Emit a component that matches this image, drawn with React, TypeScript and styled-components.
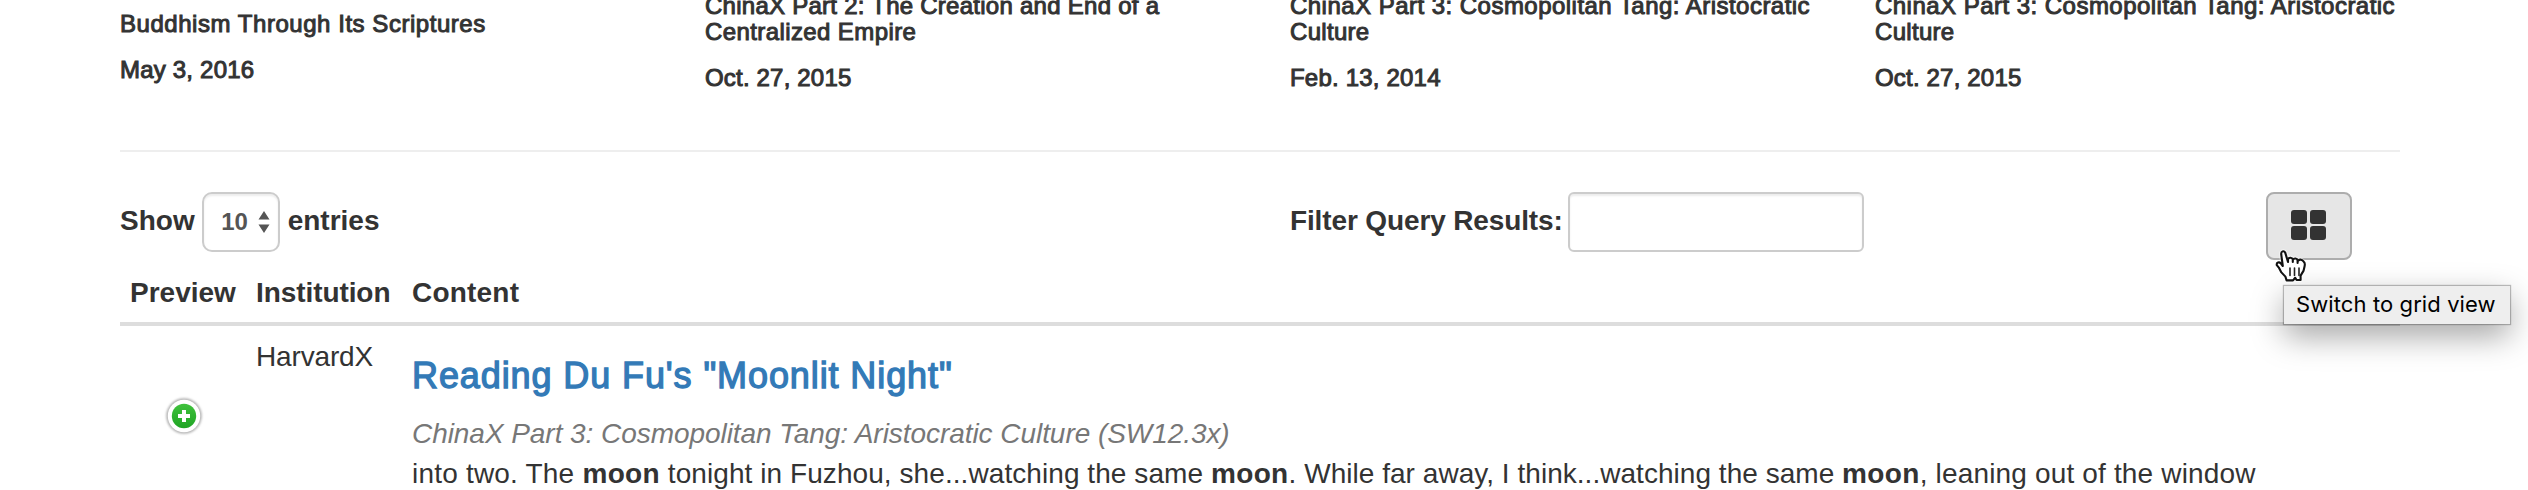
import React from "react";
import styled, { createGlobalStyle } from "styled-components";

const GlobalStyle = createGlobalStyle`
  * {
    box-sizing: border-box;
  }
  body {
    margin: 0;
    background: #fff;
    color: #333;
    font-family: "Liberation Sans", Arial, sans-serif;
    font-size: 28px;
    line-height: 40px;
  }
`;

const Page = styled.main`
  height: 490px;
  padding: 0 128px 0 120px;
  overflow: hidden;
  white-space: nowrap;
`;

const CourseRow = styled.section`
  display: grid;
  grid-template-columns: repeat(3, 585px) 1fr;
  height: 152px;
  border-bottom: 2px solid #eee;
`;

const Course = styled.article<{ $shift: number }>`
  margin-top: ${(p) => p.$shift}px;
`;

/* Medium weight, drawn as regular with a thin outline. */
const CourseLine = styled.div<{ $tracking: number }>`
  font-size: 24px;
  line-height: 26px;
  letter-spacing: ${(p) => p.$tracking}px;
  -webkit-text-stroke: 1px #333;
`;

const CourseDate = styled(CourseLine)`
  margin-top: 20px;
`;

const Toolbar = styled.section`
  display: grid;
  grid-template-columns: 1170px 1fr auto;
  align-items: start;
  height: 120px;
  padding: 40px 48px 0 0;
`;

const Field = styled.label<{ $gap: number; $tracking?: number }>`
  display: flex;
  gap: ${(p) => p.$gap}px;
  font-weight: bold;
  line-height: 58px;
  letter-spacing: ${(p) => p.$tracking ?? 0}px;
`;

const LengthSelect = styled.span`
  display: flex;
  align-items: center;
  justify-content: space-between;
  width: 78px;
  height: 60px;
  padding: 0 8px 0 17px;
  border: 2px solid #ccc;
  border-radius: 10px;
  box-shadow: inset 0 2px 2px rgba(0, 0, 0, 0.075);
  color: #555;
  font-size: 24px;
  line-height: 57px;
`;

const LengthValue = styled.span`
  height: 58px;
`;

const FilterInput = styled.input`
  width: 296px;
  height: 60px;
  border: 2px solid #ccc;
  border-radius: 6px;
  box-shadow: inset 0 2px 2px rgba(0, 0, 0, 0.075);
`;

const GridAnchor = styled.div`
  position: relative;
  width: 86px;
  height: 68px;
`;

const GridButton = styled.button`
  display: flex;
  width: 100%;
  height: 100%;
  padding: 16px 0 0 23px;
  border: 2px solid #adadad;
  border-radius: 8px;
  background: #e6e6e6;
`;

const Pointer = styled.svg`
  position: absolute;
  z-index: 2;
  left: 8px;
  top: 55px;
`;

const Tooltip = styled.div`
  position: absolute;
  z-index: 1;
  left: 18px;
  top: 94px;
  width: 226px;
  height: 38px;
  padding-left: 12px;
  background: #eee;
  box-shadow: 0 0 1px 1px rgba(0, 0, 0, 0.25), 0 12px 32px rgba(0, 0, 0, 0.36);
  color: #000;
  font-family: Inter, sans-serif;
  font-size: 22px;
  line-height: 36px;
  letter-spacing: 0.1px;
`;

const tableColumns = "126px 156px 1fr";

const TableHead = styled.div`
  display: grid;
  grid-template-columns: ${tableColumns};
  height: 54px;
  padding: 1px 0 0 10px;
  border-bottom: 4px solid #ddd;
  font-weight: bold;
`;

const TableRow = styled.div`
  display: grid;
  grid-template-columns: ${tableColumns};
  height: 164px;
  padding: 11px 0 0 10px;
`;

const HeadCell = styled.div<{ $tracking?: number }>`
  letter-spacing: ${(p) => p.$tracking ?? 0}px;
`;

const PreviewCell = styled.div`
  padding: 59px 0 0 34px;
`;

const ContentCell = styled.div`
  padding-top: 19px;
`;

const ResultTitle = styled.a`
  display: block;
  color: #337ab7;
  font-size: 36px;
  line-height: 40px;
  letter-spacing: 0.9px;
  -webkit-text-stroke: 1.3px #337ab7;
`;

const Source = styled.em`
  display: block;
  margin-top: 18px;
  color: #777;
  letter-spacing: -0.055px;
`;

const Excerpt = styled.p`
  margin: 0;
`;

const Run = styled.span<{ $tracking: number }>`
  letter-spacing: ${(p) => p.$tracking}px;
`;

const Match = styled.b`
  letter-spacing: 0.35px;
`;

const PlusIcon = () => (
  <svg width="40" height="40" viewBox="0 0 40 40" display="block">
    <defs>
      <linearGradient id="plusFill" x1="0" y1="0" x2="0" y2="1">
        <stop offset="0" stopColor="#3fc13c" />
        <stop offset="1" stopColor="#1fa424" />
      </linearGradient>
      <filter id="plusShadow" x="-20%" y="-20%" width="140%" height="140%">
        <feGaussianBlur stdDeviation="0.8" />
      </filter>
    </defs>
    <circle cx="20" cy="20" r="17.8" fill="#b4b4b4" filter="url(#plusShadow)" />
    <circle cx="20" cy="20" r="16.2" fill="#fff" />
    <circle cx="20" cy="20" r="12.2" fill="url(#plusFill)" />
    <path d="M18 14h4v4h4v4h-4v4h-4v-4h-4v-4h4z" fill="#fff" />
  </svg>
);

const GridIcon = () => (
  <svg width="35" height="30" viewBox="0 0 35 30" fill="#333">
    <rect width="16" height="14" rx="3" />
    <rect x="19" width="16" height="14" rx="3" />
    <rect y="16" width="16" height="14" rx="3" />
    <rect x="19" y="16" width="16" height="14" rx="3" />
  </svg>
);

const SortArrows = () => (
  <svg width="12" height="22" viewBox="0 0 12 22" fill="#555">
    <path d="M6 0l5.5 8.5H.5zM6 22L.5 13.5h11z" />
  </svg>
);

const HandPointer = () => (
  <Pointer width="36" height="38" viewBox="0 0 36 38">
    <path
      d="M8 15.5L7.2 7.2C7 4.2 9.8 3.2 11.2 5.6L14 11.8C15.2 10 18.2 10.2 18.8 12.6C20 10.8 23 11.2 23.6 13.4C25.6 11.6 28.6 12.6 29.4 14.6C30.8 15.4 31 17.4 30.6 19.2L29.6 23.6L26.6 28.6L26.6 33L22.6 33L21.2 30.8L19 33.4L12.6 33.4L11.4 29.6L7.4 25.4L4.8 20.6L2.8 18.2C2.2 15.4 5.2 14.6 6.8 16.4L9.4 19Z"
      fill="#fff"
      stroke="#fff"
      strokeWidth="4"
      strokeLinejoin="round"
      opacity="0.55"
    />
    <path
      d="M8.8 19L7.2 7.2C7 4.2 9.8 3.2 11.2 5.6L14 15V12.4C14.8 10 18.2 10.2 18.8 12.6V15V13C20 10.8 23 11.2 23.6 13.4V16V14.4C25.6 11.6 28.6 12.6 29.6 14.6C30.8 15.4 31 17.4 30.6 19.2L29.6 23.6L26.6 28.6L26.6 33L22.6 33L21.2 30.8L19 33.4L12.6 33.4L11.4 29.6L7.4 25.4L4.8 20.6L2.8 18.2C2.2 15.4 5.2 14.6 6.8 16.4Z"
      fill="#fff"
      stroke="#111"
      strokeWidth="2.1"
      strokeLinejoin="round"
    />
    <path d="M16 21v7.5M20.5 21v7.5M25 21v7.5" stroke="#222" strokeWidth="1.6" strokeLinecap="round" />
  </Pointer>
);

type CourseInfo = {
  shift: number;
  title: { text: string; tracking: number }[];
  date: string;
  dateTracking: number;
};

const cosmopolitan = [
  { text: "ChinaX Part 3: Cosmopolitan Tang: Aristocratic", tracking: 0.47 },
  { text: "Culture", tracking: 0.3 },
];

const courses: CourseInfo[] = [
  {
    shift: 11,
    title: [{ text: "Buddhism Through Its Scriptures", tracking: 0.54 }],
    date: "May 3, 2016",
    dateTracking: 0.2,
  },
  {
    shift: -7,
    title: [
      { text: "ChinaX Part 2: The Creation and End of a", tracking: 0.26 },
      { text: "Centralized Empire", tracking: 0.4 },
    ],
    date: "Oct. 27, 2015",
    dateTracking: 0.18,
  },
  { shift: -7, title: cosmopolitan, date: "Feb. 13, 2014", dateTracking: 0.2 },
  { shift: -7, title: cosmopolitan, date: "Oct. 27, 2015", dateTracking: 0.18 },
];

export default function App() {
  return (
    <>
      <GlobalStyle />
      <Page>
        <CourseRow>
          {courses.map((course, i) => (
            <Course key={i} $shift={course.shift}>
              {course.title.map((line) => (
                <CourseLine key={line.text} $tracking={line.tracking}>
                  {line.text}
                </CourseLine>
              ))}
              <CourseDate $tracking={course.dateTracking}>{course.date}</CourseDate>
            </Course>
          ))}
        </CourseRow>
        <Toolbar>
          <Field $gap={7.5}>
            Show
            <LengthSelect>
              <LengthValue>10</LengthValue>
              <SortArrows />
            </LengthSelect>
            entries
          </Field>
          <Field $gap={5} $tracking={-0.13}>
            Filter Query Results:
            <FilterInput type="text" />
          </Field>
          <GridAnchor>
            <GridButton aria-label="Switch to grid view">
              <GridIcon />
            </GridButton>
            <HandPointer />
            <Tooltip role="tooltip">Switch to grid view</Tooltip>
          </GridAnchor>
        </Toolbar>
        <TableHead>
          <HeadCell>Preview</HeadCell>
          <HeadCell $tracking={-0.08}>Institution</HeadCell>
          <HeadCell $tracking={0.2}>Content</HeadCell>
        </TableHead>
        <TableRow>
          <PreviewCell>
            <PlusIcon />
          </PreviewCell>
          <HeadCell $tracking={-0.15}>HarvardX</HeadCell>
          <ContentCell>
            <ResultTitle>Reading Du Fu's "Moonlit Night"</ResultTitle>
            <Source>ChinaX Part 3: Cosmopolitan Tang: Aristocratic Culture (SW12.3x)</Source>
            <Excerpt>
              <Run $tracking={0.2}>into two. The </Run>
              <Match>moon</Match>
              <Run $tracking={0.07}> tonight in Fuzhou, she...watching the same </Run>
              <Match>moon</Match>
              <Run $tracking={0.035}>. While far away, I think...watching the same </Run>
              <Match>moon</Match>
              <Run $tracking={0.16}>, leaning out of the window</Run>
            </Excerpt>
          </ContentCell>
        </TableRow>
      </Page>
    </>
  );
}
